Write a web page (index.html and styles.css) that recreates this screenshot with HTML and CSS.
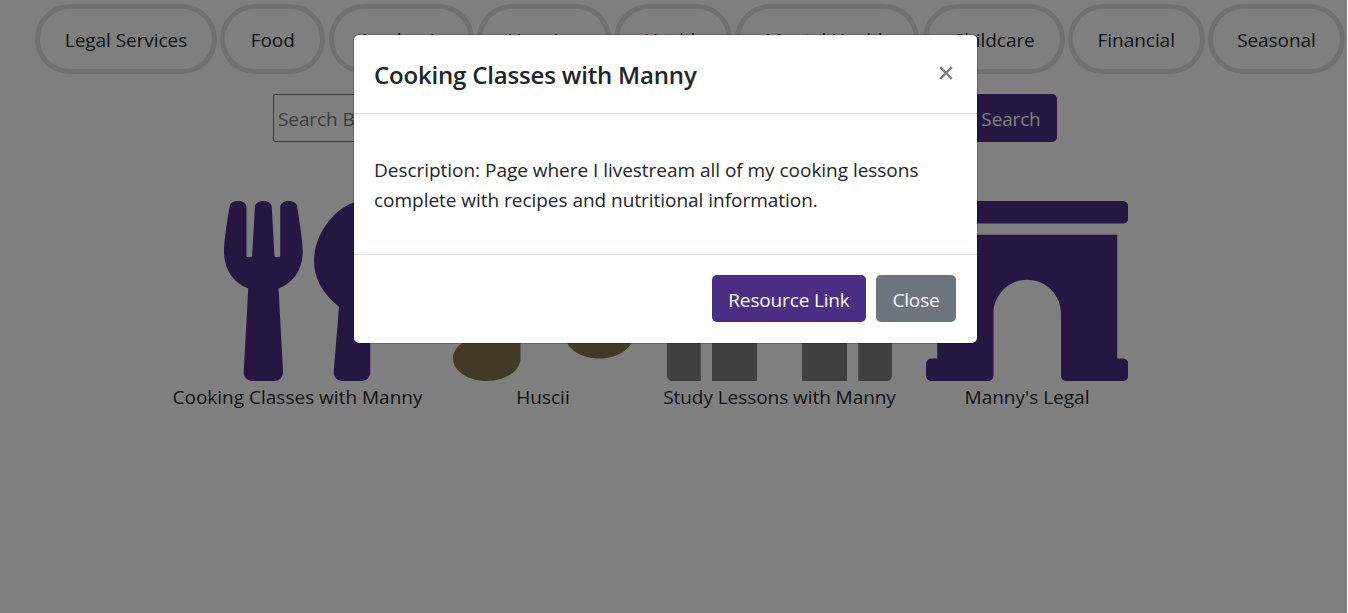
FILE: index.html
```html
<!DOCTYPE html>
<html lang="en">
<head>
<meta charset="utf-8">
<title>Resources</title>
<link rel="stylesheet" href="styles.css">
</head>
<body>
<main class="page">
  <nav class="categories">
    <a class="pill">Legal Services</a>
    <a class="pill">Food</a>
    <a class="pill">Academic</a>
    <a class="pill">Housing</a>
    <a class="pill">Health</a>
    <a class="pill">Mental Health</a>
    <a class="pill">Childcare</a>
    <a class="pill">Financial</a>
    <a class="pill">Seasonal</a>
  </nav>
  <form class="search">
    <input class="search-input" type="text" placeholder="Search By Name">
    <button class="btn btn-purple search-btn" type="button">Search</button>
  </form>
  <section class="resources">
    <article class="resource cooking">
      <svg class="icon purple" viewBox="0 0 416 512"><path d="M207.9 15.2c.8 4.7 16.1 94.5 16.1 128.8 0 52.3-27.8 89.6-68.9 104.6L168 486.7c.7 13.7-10.2 25.3-24 25.3H80c-13.7 0-24.7-11.5-24-25.3l12.9-238.1C27.7 233.6 0 196.2 0 144 0 109.6 15.3 19.9 16.1 15.2 19.3-5.1 61.4-5.4 64 16.3v141.2c1.3 3.4 15.1 3.2 16 0 1.4-25.3 7.9-139.2 8-141.8 3.3-20.8 44.7-20.8 47.9 0 .2 2.7 6.6 116.5 8 141.8.9 3.2 14.8 3.4 16 0V16.3c2.6-21.6 44.8-21.4 48-1.1zm119.2 285.7l-15 185.1c-1.2 14 9.9 26 23.9 26h56c13.3 0 24-10.7 24-24V24c0-13.2-10.7-24-24-24-82.5 0-221.4 178.5-64.9 300.9z"/></svg>
      <span class="caption">Cooking Classes with Manny</span>
    </article>
    <article class="resource huscii">
      <svg class="icon gold" viewBox="0 0 512 512"><path d="M470.38 1.51L150.41 96A32 32 0 0 0 128 126.51v261.41A139 139 0 0 0 96 384c-53 0-96 28.66-96 64s43 64 96 64 96-28.66 96-64V214.32l256-75v184.61a138.4 138.4 0 0 0-32-3.93c-53 0-96 28.66-96 64s43 64 96 64 96-28.65 96-64V32a32 32 0 0 0-41.62-30.49z"/></svg>
      <span class="caption">Huscii</span>
    </article>
    <article class="resource study">
      <svg class="icon gray" viewBox="0 0 640 512"><path d="M0 224v272c0 8.84 7.16 16 16 16h80V192H32c-17.67 0-32 14.33-32 32zm360-48h-24v-40c0-4.42-3.58-8-8-8h-16c-4.42 0-8 3.58-8 8v64c0 4.42 3.58 8 8 8h48c4.42 0 8-3.58 8-8v-16c0-4.42-3.58-8-8-8zm137.75-63.96l-160-106.67a32.02 32.02 0 0 0-35.5 0l-160 106.67A32.002 32.002 0 0 0 128 138.66V512h128V368c0-8.84 7.16-16 16-16h96c8.84 0 16 7.16 16 16v144h128V138.67c0-10.7-5.35-20.69-14.25-26.63zM320 256c-44.18 0-80-35.82-80-80s35.82-80 80-80 80 35.82 80 80-35.82 80-80 80zm288-64h-64v320h80c8.84 0 16-7.16 16-16V224c0-17.67-14.33-32-32-32z"/></svg>
      <span class="caption">Study Lessons with Manny</span>
    </article>
    <article class="resource legal">
      <svg class="icon purple" viewBox="0 0 576 512"><path d="M560 448h-16V96H32v352H16.02c-8.84 0-16 7.16-16 16v32c0 8.84 7.16 16 16 16H176c8.84 0 16-7.16 16-16V320c0-53.02 42.98-96 96-96s96 42.98 96 96l.02 160v16c0 8.84 7.16 16 16 16H560c8.84 0 16-7.16 16-16v-32c0-8.84-7.16-16-16-16zm0-448H16C7.16 0 0 7.16 0 16v32c0 8.84 7.16 16 16 16h544c8.84 0 16-7.16 16-16V16c0-8.84-7.16-16-16-16z"/></svg>
      <span class="caption">Manny's Legal</span>
    </article>
  </section>
</main>
<div class="backdrop">
  <div class="modal">
    <header class="modal-header">
      <h5 class="modal-title">Cooking Classes with Manny</h5>
      <svg class="close" viewBox="0 0 14 14"><path d="M1.2 1.2l11.6 11.6M12.8 1.2L1.2 12.8"/></svg>
    </header>
    <div class="modal-body">Description: Page where I livestream all of my cooking lessons<br>complete with recipes and nutritional information.</div>
    <footer class="modal-footer">
      <button class="btn btn-purple link-btn" type="button">Resource Link</button>
      <button class="btn btn-gray close-btn" type="button">Close</button>
    </footer>
  </div>
</div>
</body>
</html>
```
FILE: styles.css
```css
* { box-sizing: border-box; }
body {
  margin: 0;
  height: 613px;
  overflow: hidden;
  background: #fff;
  color: #212529;
  font: 19px/30px "Open Sans", "Noto Sans", sans-serif;
}
.page { padding-top: 4px; }
.categories {
  display: grid;
  grid-template-columns: 182px 105px 145px 134px 118px 184px 142px 137px 137px;
  column-gap: 3.25px;
  padding-left: 35px;
}
.pill {
  height: 70px;
  border: 5px solid #e0e0e0;
  border-radius: 35px;
  padding-top: 16px;
  text-align: center;
  white-space: nowrap;
  letter-spacing: -0.05px;
}
.search {
  display: flex;
  justify-content: space-between;
  width: 784px;
  height: 48px;
  margin: 20px 0 0 273px;
}
.search-input {
  width: 660px;
  border: 1px solid #767676;
  border-radius: 2px;
  padding: 1px 4px 0;
  font: inherit;
  letter-spacing: -0.1px;
}
.search-input::placeholder { color: #757575; opacity: 1; }
.btn {
  border: 0;
  border-radius: 5px;
  padding: 2px 0 0;
  color: #fff;
  font: inherit;
  letter-spacing: -0.15px;
  white-space: nowrap;
}
.btn-purple { background: #4b2e83; }
.btn-gray { background: #6c757d; }
.search-btn { width: 92px; }
.resources {
  display: flex;
  gap: 30px;
  margin: 58.6px 0 0 172px;
}
.resource { display: flex; flex-direction: column; align-items: center; }
.cooking { width: 251px; }
.huscii { width: 180px; }
.study { width: 233px; }
.study .caption { letter-spacing: -0.06px; }
.legal { width: 202px; }
.icon { display: block; height: 180px; }
.purple { fill: #4b2e83; }
.gold { fill: #85754d; }
.gray { fill: #808080; }
.caption { margin-top: 1.4px; white-space: nowrap; }
.backdrop {
  position: absolute;
  top: 0;
  left: 0;
  width: 1347px;
  height: 613px;
  padding: 34px 0 0 353px;
  background: rgba(0, 0, 0, 0.5);
}
.modal {
  width: 625px;
  height: 310px;
  border: 1px solid rgba(0, 0, 0, 0.2);
  border-radius: 6px;
  background: #fff;
  background-clip: padding-box;
}
.modal-header {
  display: flex;
  justify-content: space-between;
  height: 79px;
  padding: 20px 24px 0 20px;
  border-bottom: 1px solid #dee2e6;
}
.modal-title {
  margin: 0;
  font-size: 24px;
  font-weight: 600;
  letter-spacing: -0.18px;
  line-height: 40px;
  white-space: nowrap;
}
.close {
  width: 14px;
  height: 14px;
  margin-top: 11px;
  fill: none;
  stroke: #808080;
  stroke-width: 2.4;
}
.modal-body {
  height: 140px;
  padding: 41px 20px 0;
  letter-spacing: -0.03px;
  white-space: nowrap;
}
.modal-footer {
  display: flex;
  justify-content: flex-end;
  gap: 10px;
  height: 89px;
  padding: 20px 21px 0 0;
  border-top: 1px solid #dee2e6;
}
.modal-footer .btn { height: 47px; }
.link-btn { width: 154px; }
.close-btn { width: 80px; }
```
